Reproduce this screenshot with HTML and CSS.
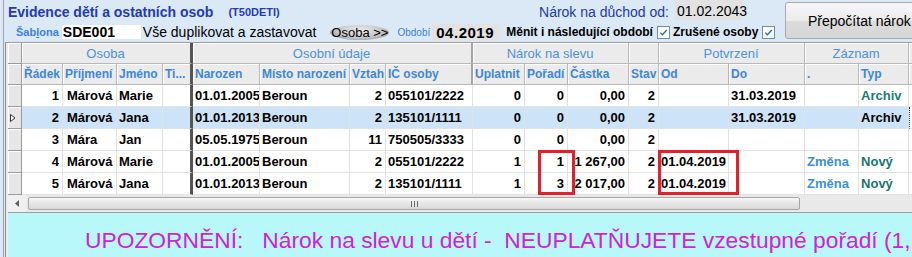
FILE: index.html
```html
<!DOCTYPE html>
<html lang="cs">

<head>
    <meta charset="UTF-8">
    <meta name="viewport" content="width=device-width, initial-scale=1.0">
    <title>Evidence dětí a ostatních osob</title>
    <link rel="stylesheet" href="styles.css">
</head>

<body>
    <div class="window">
        <div class="top">
            <div class="top-main">
                <div class="title-row">
                    <span class="title">Evidence dětí a ostatních osob</span>
                    <span class="title title-code">(T50DETI)</span>
                    <span class="pension-label">Nárok na důchod od:</span>
                    <span class="pension-date">01.02.2043</span>
                </div>
                <div class="tool-row">
                    <span class="template-label">Šab<u>l</u>ona</span>
                    <span class="template-box">SDE001</span>
                    <span class="template-name">Vše duplikovat a zastavovat</span>
                    <span class="oval-btn">Osoba &gt;&gt;</span>
                    <span class="period-label">Období</span>
                    <span class="period-box">04.2019</span>
                    <span class="opt-label">Měnit i následující období</span>
                    <svg class="check" width="13" height="13" viewBox="0 0 13 13">
                        <rect x="0.5" y="0.5" width="12" height="12" fill="#fff" stroke="#6a8cbc"/>
                        <path d="M3.2 6.6 L5.4 8.8 L9.8 4" fill="none" stroke="#2f66b3" stroke-width="1.3"/>
                    </svg>
                    <span class="opt-label opt-second">Zrušené osoby</span>
                    <svg class="check" width="13" height="13" viewBox="0 0 13 13">
                        <rect x="0.5" y="0.5" width="12" height="12" fill="#fff" stroke="#6a8cbc"/>
                        <path d="M3.2 6.6 L5.4 8.8 L9.8 4" fill="none" stroke="#2f66b3" stroke-width="1.3"/>
                    </svg>
                </div>
            </div>
            <button class="recalc">Přepočítat nárok na slevu</button>
        </div>

        <div class="grid-wrap">
            <table class="grid">
                <colgroup>
                    <col class="c-ind"><col class="c-row"><col class="c-sur"><col class="c-name"><col class="c-ti">
                    <col class="c-born"><col class="c-place"><col class="c-rel"><col class="c-ic">
                    <col class="c-use"><col class="c-ord"><col class="c-amt"><col class="c-st">
                    <col class="c-from"><col class="c-to"><col class="c-dot"><col class="c-typ"><col class="c-x">
                </colgroup>
                <tr class="group-row">
                    <th class="ind"></th>
                    <th colspan="4" class="sep-thick">Osoba</th>
                    <th colspan="4" class="sep">Osobní údaje</th>
                    <th colspan="3">Nárok na slevu</th>
                    <th></th>
                    <th colspan="2">Potvrzení</th>
                    <th colspan="2">Záznam</th>
                    <th></th>
                </tr>
                <tr class="label-row">
                    <th class="ind"></th>
                    <th>Řádek</th>
                    <th>Příjmení</th>
                    <th>Jméno</th>
                    <th class="sep-thick">Ti...</th>
                    <th>Narozen</th>
                    <th>Místo narození</th>
                    <th>Vztah</th>
                    <th class="sep">IČ osoby</th>
                    <th>Uplatnit</th>
                    <th>Pořadí</th>
                    <th>Částka</th>
                    <th>Stav</th>
                    <th>Od</th>
                    <th>Do</th>
                    <th>.</th>
                    <th>Typ</th>
                    <th></th>
                </tr>
                <tr class="data-row">
                    <td class="ind"></td>
                    <td class="num">1</td><td class="surname">Márová</td><td>Marie</td><td class="sep-thick"></td>
                    <td>01.01.2005</td><td>Beroun</td><td class="num">2</td><td>055101/2222</td>
                    <td class="num">0</td><td class="num">0</td><td class="num">0,00</td><td class="num">2</td>
                    <td></td><td>31.03.2019</td><td></td><td class="type-archive">Archiv</td><td></td>
                </tr>
                <tr class="data-row selected">
                    <td class="ind">
                        <svg width="6" height="8" viewBox="0 0 6 8"><path d="M0.5 0.5 L5 4 L0.5 7.5 Z" fill="#fff" stroke="#333"/></svg>
                    </td>
                    <td class="num">2</td><td class="surname">Márová</td><td>Jana</td><td class="sep-thick"></td>
                    <td>01.01.2013</td><td>Beroun</td><td class="num">2</td><td>135101/1111</td>
                    <td class="num">0</td><td class="num">0</td><td class="num">0,00</td><td class="num">2</td>
                    <td></td><td>31.03.2019</td><td></td><td>Archiv</td><td class="focus-edge"></td>
                </tr>
                <tr class="data-row">
                    <td class="ind"></td>
                    <td class="num">3</td><td class="surname">Mára</td><td>Jan</td><td class="sep-thick"></td>
                    <td>05.05.1975</td><td>Beroun</td><td class="num">11</td><td>750505/3333</td>
                    <td class="num">0</td><td class="num">0</td><td class="num">0,00</td><td class="num">2</td>
                    <td></td><td></td><td></td><td></td><td></td>
                </tr>
                <tr class="data-row">
                    <td class="ind"></td>
                    <td class="num">4</td><td class="surname">Márová</td><td>Marie</td><td class="sep-thick"></td>
                    <td>01.01.2005</td><td>Beroun</td><td class="num">2</td><td>055101/2222</td>
                    <td class="num">1</td><td class="num">1</td><td class="num">1 267,00</td><td class="num">2</td>
                    <td>01.04.2019</td><td></td><td class="change">Změna</td><td class="type-new">Nový</td><td></td>
                </tr>
                <tr class="data-row">
                    <td class="ind"></td>
                    <td class="num">5</td><td class="surname">Márová</td><td>Jana</td><td class="sep-thick"></td>
                    <td>01.01.2013</td><td>Beroun</td><td class="num">2</td><td>135101/1111</td>
                    <td class="num">1</td><td class="num">3</td><td class="num">2 017,00</td><td class="num">2</td>
                    <td>01.04.2019</td><td></td><td class="change">Změna</td><td class="type-new">Nový</td><td></td>
                </tr>
            </table>

            <div class="hscroll">
                <div class="scroll-arrow">
                    <svg width="4" height="7" viewBox="0 0 4 7"><path d="M4 0 L0 3.5 L4 7 Z" fill="#606060"/></svg>
                </div>
                <div class="scroll-thumb">
                    <span class="grip"></span><span class="grip"></span><span class="grip"></span>
                </div>
            </div>

            <div class="notice">UPOZORNĚNÍ:   Nárok na slevu u dětí -  NEUPLATŇUJETE vzestupné pořadí (1, 2, 3)</div>
        </div>

        <!-- red highlight marks drawn over the grid -->
        <div class="mark mark-order"></div>
        <div class="mark mark-from"></div>
    </div>
</body>

</html>
```

FILE: styles.css
```css
* {
    box-sizing: border-box;
}

body {
    margin: 0;
    width: 912px;
    height: 257px;
    overflow: hidden;
    background-color: #dbe9f6;
    font-family: "Liberation Sans", Arial, sans-serif;
    color: #000;
}

.window {
    position: relative;
    height: 257px;
    margin-left: 3px;
    border-left: 1px solid #a3a3a3;
}

/* top bar */

.top {
    display: flex;
    height: 42px;
}

.top-main {
    flex: none;
    width: 781px;
}

.title-row {
    display: flex;
    align-items: center;
    height: 22px;
    padding-left: 4px;
    padding-top: 1px;
}

.title {
    font-size: 14px;
    font-weight: bold;
    color: #2339b6;
}

.title-code {
    margin-left: 15px;
    font-size: 11px;
}

.pension-label {
    margin-left: auto;
    font-size: 14px;
    color: #1c3aa6;
}

.pension-date {
    align-self: flex-start;
    width: 68px;
    height: 20px;
    margin: -1px 42px 0 6px;
    padding: 3px 0 0 2px;
    background-color: #e2e2e2;
    font-size: 14px;
}

.tool-row {
    display: flex;
    align-items: center;
    height: 20px;
    padding-left: 12px;
}

.template-label {
    font-size: 11px;
    font-weight: bold;
    color: #3c82dc;
}

.template-box {
    width: 79px;
    height: 14px;
    margin-left: 3px;
    padding-left: 1px;
    background-color: #fff;
    font-size: 14px;
    font-weight: bold;
    line-height: 14px;
}

.template-name {
    margin-left: 2px;
    font-size: 14px;
}

.oval-btn {
    margin-left: 14px;
    padding: 0 1px;
    height: 15px;
    line-height: 15px;
    font-size: 13px;
    border-radius: 50%;
    background: radial-gradient(ellipse at 50% 35%, #eeeeee 0%, #c4c4c4 55%, #858585 100%);
}

.period-label {
    margin-left: 8px;
    font-size: 10px;
    color: #3a80dc;
}

.period-box {
    width: 69px;
    height: 17px;
    margin-left: 2px;
    padding-left: 4px;
    background-color: #e2e2e2;
    font-size: 15px;
    font-weight: bold;
    letter-spacing: 0.5px;
    line-height: 17px;
}

.opt-label {
    margin-left: 5px;
    font-size: 12px;
    font-weight: bold;
}

.opt-second {
    margin-left: 3px;
}

.check {
    flex: none;
    margin-left: 4px;
}

/* recalculate button */

.recalc {
    flex: none;
    width: 150px;
    height: 37px;
    margin-top: 2px;
    padding: 0 0 0 22px;
    text-align: left;
    white-space: nowrap;
    overflow: hidden;
    border: 1px solid #a9a9a9;
    border-radius: 3px;
    background: linear-gradient(#f6f6f6, #ebebeb 50%, #dcdcdc 51%, #d6d6d6);
    font-family: "Liberation Sans", Arial, sans-serif;
    font-size: 14px;
    color: #000;
}

/* grid */

.grid-wrap {
    margin-left: 1px;
    padding-left: 2px;
    border-top: 1px solid #9c9c9c;
    border-left: 1px solid #8e8e8e;
    background-color: #ececec;
    overflow: hidden;
}

.grid {
    table-layout: fixed;
    width: 931px;
    border-collapse: separate;
    border-spacing: 0;
    background-color: #fff;
}

.c-ind { width: 14px; }
.c-row { width: 41px; }
.c-sur { width: 54px; }
.c-name { width: 46px; }
.c-ti { width: 30px; }
.c-born { width: 67px; }
.c-place { width: 90px; }
.c-rel { width: 36px; }
.c-ic { width: 87px; }
.c-use { width: 52px; }
.c-ord { width: 43px; }
.c-amt { width: 61px; }
.c-st { width: 30px; }
.c-from { width: 70px; }
.c-to { width: 76px; }
.c-dot { width: 54px; }
.c-typ { width: 50px; }
.c-x { width: 30px; }

th,
td {
    padding: 0 3px 0 2px;
    white-space: nowrap;
    overflow: hidden;
}

th {
    background-color: #ebebeb;
    border-right: 1px solid #b8b8b8;
    border-bottom: 1px solid #b8b8b8;
    box-shadow: inset 1px 1px 0 #fff;
}

.group-row {
    height: 21px;
}

.group-row th {
    font-size: 13px;
    font-weight: normal;
    color: #4a92dc;
    text-align: center;
}

.label-row {
    height: 21px;
}

.label-row th {
    font-size: 12px;
    font-weight: bold;
    color: #3d87d9;
    text-align: left;
}

.data-row {
    height: 22px;
}

td {
    border-right: 1px solid #e2e2e2;
    border-bottom: 1px solid #e2e2e2;
    font-size: 13px;
    font-weight: bold;
}

.num {
    text-align: right;
}

td.surname {
    padding-left: 4px;
}

th.sep-thick,
td.sep-thick {
    border-right: 3px solid #555;
}

th.sep {
    border-right: 2px solid #a4a4a4;
}

th.ind,
td.ind {
    padding: 0 0 0 2px;
    background-color: #e6e6e6;
    border-right: 1px solid #9a9a9a;
    border-bottom: 1px solid #9a9a9a;
    box-shadow: inset 1px 1px 0 #fff;
}

td.ind svg {
    display: block;
}

.selected td {
    background-color: #cde3f8;
}

.selected td.ind {
    background-color: #e6e6e6;
}

.selected .focus-edge {
    background-color: #fff;
    border-left: 1px dotted #333;
}

.type-archive {
    color: #1d7d70;
}

.type-new {
    color: #17766c;
}

.change {
    color: #3b8fe3;
}

/* horizontal scrollbar */

.hscroll {
    display: flex;
    align-items: center;
    height: 17px;
    background-color: #e9e9e9;
}

.scroll-arrow {
    display: flex;
    align-items: center;
    justify-content: center;
    width: 18px;
    height: 17px;
    background-color: #f0f0f0;
}

.scroll-thumb {
    display: flex;
    align-items: center;
    justify-content: center;
    gap: 2px;
    width: 772px;
    height: 13px;
    margin-left: 2px;
    border: 1px solid #a6a6a6;
    border-radius: 2px;
    background: linear-gradient(#f7f7f7, #e6e6e6 50%, #d8d8d8);
}

.grip {
    width: 1px;
    height: 6px;
    background-color: #6c6c6c;
}

/* warning strip */

.notice {
    height: 45px;
    padding: 16px 0 0 77px;
    border-top: 1px solid #9f9f9f;
    background-color: #b9f8fa;
    color: #cf23d6;
    font-size: 22.8px;
    line-height: 23px;
    white-space: pre;
}

/* red marks */

.mark {
    position: absolute;
    top: 150px;
    height: 45px;
    border: 3px solid #e3202b;
}

.mark-order {
    left: 534px;
    width: 37px;
}

.mark-from {
    left: 654px;
    width: 81px;
}
```
